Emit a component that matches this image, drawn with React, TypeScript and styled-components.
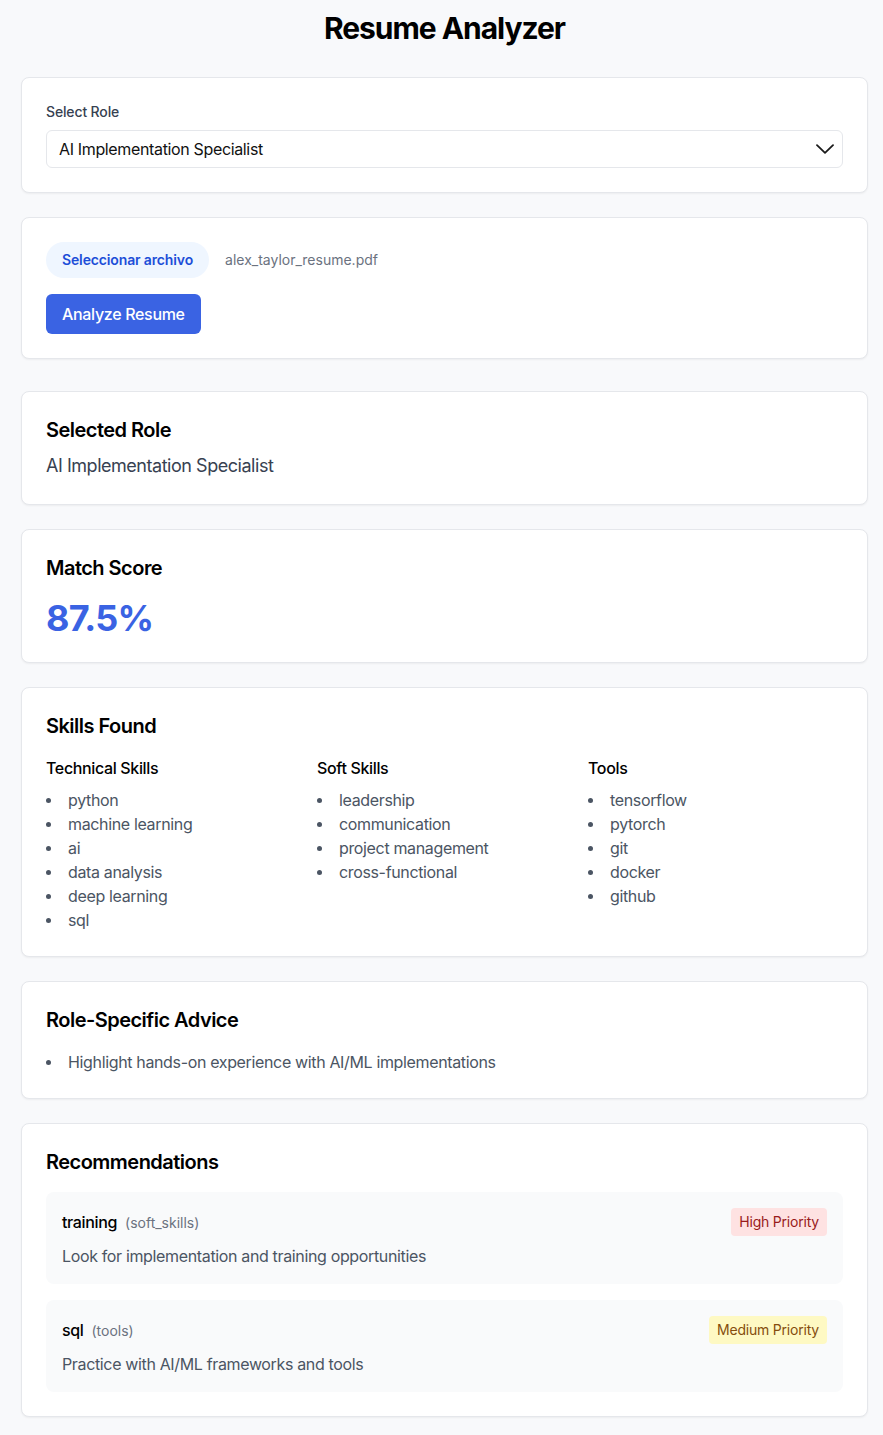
import styled, { createGlobalStyle } from "styled-components"

type Priority = 'high' | 'medium'

interface Recommendation {
    name: string
    category: string
    text: string
    priority: Priority
}

const skillGroups = [
    { title: 'Technical Skills', items: ['python', 'machine learning', 'ai', 'data analysis', 'deep learning', 'sql'] },
    { title: 'Soft Skills', items: ['leadership', 'communication', 'project management', 'cross-functional'] },
    { title: 'Tools', items: ['tensorflow', 'pytorch', 'git', 'docker', 'github'] },
]

const recommendations: Recommendation[] = [
    { name: 'training', category: 'soft_skills', text: 'Look for implementation and training opportunities', priority: 'high' },
    { name: 'sql', category: 'tools', text: 'Practice with AI/ML frameworks and tools', priority: 'medium' },
]

const priorityLabel: Record<Priority, string> = {
    high: 'High Priority',
    medium: 'Medium Priority',
}

export default function App() {
    return (
        <>
            <GlobalStyle />
            <Page>
                <Title>Resume Analyzer</Title>

                <Stack>
                    <Card>
                        <Label>Select Role</Label>
                        <SelectBox>
                            <span>AI Implementation Specialist</span>
                            <svg width="18" height="10" viewBox="0 0 18 10" fill="none">
                                <path d="M1 1.2 L9 8.8 L17 1.2" stroke="#1a1a1a" strokeWidth="1.8" strokeLinecap="round" strokeLinejoin="round" />
                            </svg>
                        </SelectBox>
                    </Card>

                    <Card>
                        <FileRow>
                            <FilePill>Seleccionar archivo</FilePill>
                            <FileName>alex_taylor_resume.pdf</FileName>
                        </FileRow>
                        <PrimaryButton>Analyze Resume</PrimaryButton>
                    </Card>
                </Stack>

                <Results>
                    <Card>
                        <CardTitle>Selected Role</CardTitle>
                        <RoleText>AI Implementation Specialist</RoleText>
                    </Card>

                    <Card>
                        <CardTitle spaced>Match Score</CardTitle>
                        <Score>87.5%</Score>
                    </Card>

                    <Card>
                        <CardTitle spaced>Skills Found</CardTitle>
                        <SkillsGrid>
                            {skillGroups.map(group => (
                                <div key={group.title}>
                                    <GroupTitle>{group.title}</GroupTitle>
                                    <BulletList>
                                        {group.items.map(item => <li key={item}>{item}</li>)}
                                    </BulletList>
                                </div>
                            ))}
                        </SkillsGrid>
                    </Card>

                    <Card>
                        <CardTitle spaced>Role-Specific Advice</CardTitle>
                        <BulletList>
                            <li>Highlight hands-on experience with AI/ML implementations</li>
                        </BulletList>
                    </Card>

                    <Card>
                        <CardTitle spaced>Recommendations</CardTitle>
                        <RecList>
                            {recommendations.map(rec => (
                                <RecItem key={rec.name}>
                                    <RecHeader>
                                        <div>
                                            <RecName>{rec.name}</RecName>
                                            <RecCategory>({rec.category})</RecCategory>
                                        </div>
                                        <Badge priority={rec.priority}>{priorityLabel[rec.priority]}</Badge>
                                    </RecHeader>
                                    <RecText>{rec.text}</RecText>
                                </RecItem>
                            ))}
                        </RecList>
                    </Card>
                </Results>
            </Page>
        </>
    )
}

const GlobalStyle = createGlobalStyle`
    * {
        box-sizing: border-box;
    }
    body {
        margin: 0;
        background: #f8f9fb;
        font-family: 'Inter', 'Noto Sans', sans-serif;
        color: #111;
    }
`

const Page = styled.div`
    padding: 10px 15px 18px 21px;
`

const Title = styled.h1`
    margin: 0 0 31px;
    text-align: center;
    font-size: 30px;
    line-height: 36px;
    font-weight: 700;
    letter-spacing: -0.035em;
    color: #000;
`

const Stack = styled.div`
    display: flex;
    flex-direction: column;
    gap: 24px;
`

const Results = styled.div`
    margin-top: 32px;
    display: flex;
    flex-direction: column;
    gap: 24px;
`

const Card = styled.div`
    background: #fff;
    border: 1px solid #e5e7eb;
    border-radius: 8px;
    box-shadow: 0 1px 2px rgba(0, 0, 0, 0.05);
    padding: 24px;
`

const Label = styled.label`
    display: block;
    font-size: 14px;
    line-height: 20px;
    font-weight: 500;
    color: #374151;
    letter-spacing: -0.01em;
    margin-bottom: 8px;
`

const SelectBox = styled.div`
    height: 38px;
    display: flex;
    align-items: center;
    justify-content: space-between;
    padding: 0 8px 0 12px;
    border: 1px solid #e5e7eb;
    border-radius: 6px;
    font-size: 16px;
    letter-spacing: -0.022em;
    color: #111;
`

const FileRow = styled.div`
    display: flex;
    align-items: center;
    gap: 16px;
    margin-bottom: 16px;
`

const FilePill = styled.span`
    display: inline-block;
    padding: 8px 16px;
    border-radius: 999px;
    background: #eff6ff;
    color: #1d4ed8;
    font-size: 14px;
    line-height: 20px;
    font-weight: 600;
    letter-spacing: -0.01em;
`

const FileName = styled.span`
    font-size: 14px;
    line-height: 20px;
    color: #6b7280;
`

const PrimaryButton = styled.button`
    display: block;
    border: none;
    border-radius: 6px;
    background: #3a63e3;
    color: #fff;
    font-family: inherit;
    font-size: 16px;
    line-height: 24px;
    font-weight: 500;
    letter-spacing: -0.02em;
    padding: 8px 16px;
`

const CardTitle = styled.h2<{ spaced?: boolean }>`
    margin: 0 0 ${props => props.spaced ? '16px' : '8px'};
    font-size: 20px;
    line-height: 28px;
    font-weight: 600;
    letter-spacing: -0.026em;
    color: #000;
`

const RoleText = styled.p`
    margin: 0;
    font-size: 18px;
    line-height: 28px;
    letter-spacing: -0.026em;
    color: #374151;
`

const Score = styled.div`
    font-size: 36px;
    line-height: 40px;
    font-weight: 700;
    letter-spacing: -0.022em;
    color: #3a63e3;
`

const SkillsGrid = styled.div`
    display: grid;
    grid-template-columns: repeat(3, 1fr);
    gap: 16px;
`

const GroupTitle = styled.h3`
    margin: 0 0 8px;
    font-size: 16px;
    line-height: 24px;
    font-weight: 500;
    letter-spacing: -0.022em;
    color: #000;
`

const BulletList = styled.ul`
    margin: 0;
    padding: 0;
    list-style: none;

    li {
        display: flex;
        align-items: center;
        font-size: 16px;
        line-height: 24px;
        letter-spacing: -0.022em;
        color: #4b5563;
    }

    li::before {
        content: "";
        flex-shrink: 0;
        width: 5px;
        height: 5px;
        border-radius: 50%;
        background: #4b5563;
        margin: 0 17px 0 0;
    }
`

const RecList = styled.div`
    display: flex;
    flex-direction: column;
    gap: 16px;
`

const RecItem = styled.div`
    background: #f9fafb;
    border-radius: 8px;
    padding: 16px;
`

const RecHeader = styled.div`
    display: flex;
    align-items: center;
    justify-content: space-between;
    margin-bottom: 8px;
`

const RecName = styled.span`
    font-size: 16px;
    font-weight: 500;
    letter-spacing: -0.022em;
    color: #000;
`

const RecCategory = styled.span`
    margin-left: 8px;
    font-size: 14px;
    color: #6b7280;
`

const Badge = styled.span<{ priority: Priority }>`
    padding: 4px 8px;
    border-radius: 4px;
    font-size: 14px;
    line-height: 20px;
    letter-spacing: -0.015em;
    background: ${props => props.priority === 'high' ? '#fee2e2' : '#fef9c3'};
    color: ${props => props.priority === 'high' ? '#991b1b' : '#854d0e'};
`

const RecText = styled.p`
    margin: 0;
    font-size: 16px;
    line-height: 24px;
    letter-spacing: -0.022em;
    color: #4b5563;
`
